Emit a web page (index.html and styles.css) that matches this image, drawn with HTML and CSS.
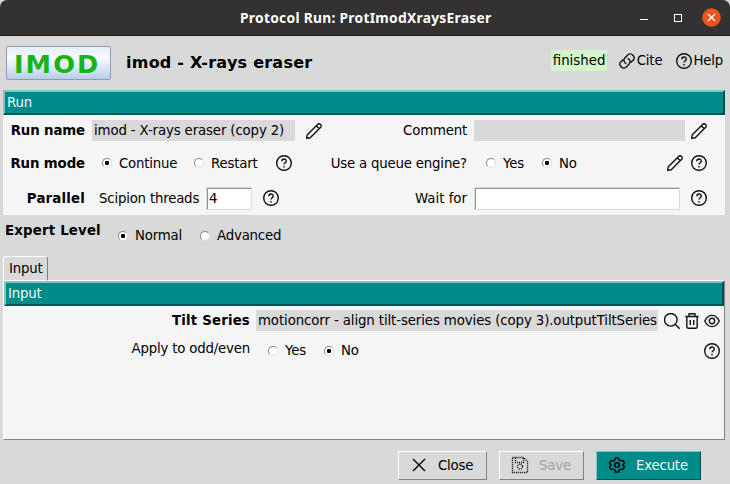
FILE: index.html
```html
<!DOCTYPE html>
<html lang="en">
<head>
<meta charset="utf-8">
<title>Protocol Run: ProtImodXraysEraser</title>
<link rel="stylesheet" href="styles.css">
</head>
<body>
<svg class="defs" width="0" height="0">
  <symbol id="help" viewBox="0 0 16 16"><circle cx="8" cy="8" r="7.3"/><path d="M5.8 6.3C5.8 3.2 10.3 3.3 10.3 6C10.3 7.7 8 7.8 8 9.6M8 11V12.4"/></symbol>
  <symbol id="pencil" viewBox="0 0 16 16"><path d="M.6 15.4L1.3 11.8L11.8 1.3C13.5-.4 16.4 2.5 14.7 4.2L4.2 14.7ZM10.4 2.9L13.1 5.6"/></symbol>
  <symbol id="link" viewBox="0 0 16 16"><path d="M4.2 6.4L1.7 8.9C-.9 11.9 3.5 16.9 7 14.3L10 11.3C12.1 8.9 10.8 6 8.6 5.3M11.8 9.6L14.3 7.1C16.9 4.1 12.5-.9 9 1.7L6 4.7C3.9 7.1 5.2 10 7.4 10.7"/></symbol>
  <symbol id="search" viewBox="0 0 16 16"><circle cx="6.8" cy="6.8" r="6.3"/><path d="M11.2 11.2L15.8 15.8"/></symbol>
  <symbol id="trash" viewBox="0 0 16 16"><path d="M1.3 3.5H14.7M5 3.2V.8H11V3.2M2.8 3.8V13.5Q2.8 15.3 4.5 15.3H11.5Q13.2 15.3 13.2 13.5V3.8M6.3 7V12M9.7 7V12"/></symbol>
  <symbol id="eye" viewBox="0 0 16 16"><path d="M.7 8Q3.7 2.4 8 2.4T15.3 8Q12.3 13.6 8 13.6T.7 8Z"/><circle cx="8" cy="8" r="2.7"/></symbol>
</svg>

<header class="titlebar">
  <span class="window-title">Protocol Run: ProtImodXraysEraser</span>
  <span class="window-controls">
    <i class="minimize"></i><i class="maximize"></i>
    <svg class="close" viewBox="0 0 19 19"><circle cx="9.5" cy="9.5" r="9.3"/><path d="M6 6L13 13M13 6L6 13"/></svg>
  </span>
</header>

<section class="protocol">
  <div class="logo">IMOD</div>
  <h1>imod - X-rays eraser</h1>
  <span class="status">finished</span>
  <span class="action cite"><svg class="icon"><use href="#link"/></svg>Cite</span>
  <span class="action"><svg class="icon"><use href="#help"/></svg>Help</span>
</section>

<section class="run">
  <h2 class="bar">Run</h2>
  <div class="grid">
    <b class="label tight">Run name</b>
    <div class="cell"><span class="value name">imod - X-rays eraser (copy 2)</span><svg class="icon"><use href="#pencil"/></svg></div>
    <span class="label">Comment</span>
    <div class="cell"><span class="value comment"></span><svg class="icon last"><use href="#pencil"/></svg></div>

    <b class="label tight">Run mode</b>
    <div class="cell radios"><i class="radio on"></i><span class="choice continue">Continue</span><i class="radio"></i><span class="choice restart">Restart</span><svg class="icon"><use href="#help"/></svg></div>
    <span class="label">Use a queue engine?</span>
    <div class="cell radios queue"><i class="radio"></i><span class="choice yes">Yes</span><i class="radio on"></i><span class="choice">No</span><svg class="icon last edit"><use href="#pencil"/></svg><svg class="icon"><use href="#help"/></svg></div>

    <b class="label">Parallel</b>
    <div class="cell threads"><span class="caption">Scipion threads</span><span class="entry small">4</span><svg class="icon"><use href="#help"/></svg></div>
    <span class="label wait">Wait for</span>
    <div class="cell"><span class="entry wide"></span><svg class="icon last"><use href="#help"/></svg></div>
  </div>
</section>

<section class="expert">
  <b>Expert Level</b>
  <div class="cell"><i class="radio on"></i><span class="choice normal">Normal</span><i class="radio"></i><span class="choice">Advanced</span></div>
</section>

<div class="tab">Input</div>
<section class="pane">
  <h2 class="bar">Input</h2>
  <div class="param">
    <b class="label">Tilt Series</b>
    <span class="value series">motioncorr - align tilt-series movies (copy 3).outputTiltSeries</span>
    <span class="tools"><svg class="icon"><use href="#search"/></svg><svg class="icon"><use href="#trash"/></svg><svg class="icon"><use href="#eye"/></svg></span>
  </div>
  <div class="param odd">
    <span class="label">Apply to odd/even</span>
    <div class="cell"><i class="radio"></i><span class="choice yes">Yes</span><i class="radio on"></i><span class="choice">No</span></div>
    <span class="tools"><svg class="icon"><use href="#help"/></svg></span>
  </div>
</section>

<footer>
  <div class="button shut"><svg class="icon" viewBox="0 0 16 16"><path d="M2 2L14 14M14 2L2 14"/></svg>Close</div>
  <div class="button save"><svg class="icon" viewBox="0 0 16 16"><path d="M.5 .5H11.5L15.5 4.5V15.5H.5ZM3.5 1V5.5H11.5V1"/><circle cx="8" cy="9.6" r="2.5"/></svg>Save</div>
  <div class="button execute"><svg class="icon" viewBox="0 0 16 16"><path d="M6.3 1H9.7L10.2 3.1L11.8 4L13.9 3.3L15.5 6.2L13.9 7.7V8.3L15.5 9.8L13.9 12.7L11.8 12L10.2 12.9L9.7 15H6.3L5.8 12.9L4.2 12L2.1 12.7L.5 9.8L2.1 8.3V7.7L.5 6.2L2.1 3.3L4.2 4L5.8 3.1Z"/><circle cx="8" cy="8" r="2.3"/></svg>Execute</div>
</footer>
</body>
</html>
```
FILE: styles.css
```css
* { box-sizing: border-box; }
body {
  margin: 0; width: 730px; height: 484px; overflow: hidden;
  background: #d9d9d9; color: #000;
  font: 13.33px/21px "DejaVu Sans", sans-serif; letter-spacing: -0.2px;
  white-space: nowrap;
}
.defs { display: block; }
b, h1 { font-weight: bold; }
b { letter-spacing: 0.18px; }
.tight { letter-spacing: -0.12px; }

.icon {
  width: 16px; height: 16px; flex: none; overflow: visible;
  fill: none; stroke: #111; stroke-width: 1.4; stroke-linejoin: round;
}

.titlebar {
  display: grid; grid-template-columns: 240px 1fr auto; align-items: center;
  height: 36px; padding-right: 9px;
  background: #333132; border-bottom: 1px solid #1d1c1c;
  border-radius: 7px 7px 0 0;
}
.window-title { grid-column: 2; color: #fff; font: bold 13.8px/35px "Noto Sans", sans-serif; letter-spacing: 0.28px; }
.window-controls { display: flex; align-items: center; }
.minimize { width: 8px; height: 1px; background: #fff; margin: 4px 26px 0 0; }
.maximize { width: 8px; height: 8px; border: 1px solid #fff; margin-right: 20px; }
.close { width: 19px; height: 19px; margin-top: -1px; fill: #e95420; stroke: #fff; stroke-width: 1.4; }
.close circle { stroke: none; }

.protocol { display: flex; height: 54px; padding: 10px 7px 0 6px; align-items: flex-start; }
.logo {
  width: 105px; height: 34px; padding-left: 7px;
  border: 1px solid #8c9bb0; border-radius: 2px;
  background: linear-gradient(#e4eefa, #f7fafe 35%, #b8cfe8);
  color: #14b514; font-weight: bold; font-size: 25.6px; line-height: 35px; letter-spacing: 2.1px;
}
h1 { margin: 6px 0 0 15px; font-size: 16px; line-height: 21px; letter-spacing: 0.24px; }
.status { margin: 4px 12px 0 auto; width: 56px; padding-left: 2px; letter-spacing: 0; background: #d2f5cb; }
.action { display: flex; align-items: center; margin-top: 4px; height: 21px; gap: 1px; }
.cite { margin-right: 14px; gap: 2px; }

.run { margin: 0 5px 0 3px; height: 125px; background: #f5f5f5; }
.bar {
  margin: 0; height: 25px; padding-left: 2px;
  border: 2px solid; border-color: #80c5c5 #004f4f #005454 #80c5c5;
  background: #008b8b; color: #f5f5f5; font-size: inherit; font-weight: normal; line-height: 21.5px;
}
.grid {
  display: grid; grid-template-columns: 82px 230px 138px 1fr; column-gap: 7px;
  grid-template-rows: 31px 34px 36px; align-items: center;
}
.label { text-align: right; justify-self: end; }
.wait { letter-spacing: 0; }
.cell { display: flex; align-items: center; }
.value { height: 21px; padding-left: 2px; background: #d9d9d9; }
.name { width: 204px; margin-right: 11px; letter-spacing: -0.14px; }
.series { letter-spacing: -0.11px; }
.comment { width: 211px; }
.last { margin-left: auto; }
.grid .cell:nth-child(4n) { padding-right: 18px; }

.radio { width: 10px; height: 10px; flex: none; border: 1px solid; border-color: #888 #ddd #ddd #888; border-radius: 50%; background: #fff; }
.on { background: radial-gradient(circle, #000 0 1.9px, #fff 2.5px); }
.radios { padding-left: 10px; }
.choice { margin-left: 7px; }
.continue { width: 75px; }
.restart { width: 65px; }
.yes { width: 39px; }
.queue { padding-left: 12px; }
.edit { margin-right: 8px; }
.threads { padding-left: 7px; }
.caption { width: 107px; }
.entry { height: 23px; padding-left: 2px; background: #fff; border: 1px solid #d9d9d9; box-shadow: inset 1px 1px #929292; line-height: 21px; }
.small { width: 46px; margin-right: 11px; }
.wide { width: 206px; }

.expert { display: flex; height: 41px; padding: 5px 5px 0; align-items: flex-start; }
.expert b { width: 113px; }
.expert .cell { margin-top: 5px; height: 21px; }
.normal { width: 65px; }

.tab {
  position: relative;
  width: 45px; height: 25px; margin-left: 3px; padding-left: 5px; line-height: 23px;
  border: 1px solid; border-color: #fff #828282 transparent #fff; border-radius: 3px 3px 0 0;
}
.pane {
  height: 160px; margin: -1px 5px 0 3px; background: #f5f5f5;
  border: 1px solid; border-color: #fff #828282 #828282 #fff;
}
.param { display: grid; grid-template-columns: 246px 402px 1fr; column-gap: 6px; height: 29px; align-items: center; }
.param .cell { padding-left: 12px; margin-top: 2px; }
.odd .label { margin-top: -2px; }
.tools { display: flex; justify-content: flex-end; gap: 4px; padding-right: 4px; }
.odd .tools { margin-top: 3px; }

footer { display: flex; justify-content: flex-end; margin-top: 11px; padding-right: 29px; gap: 12px; }
.button {
  display: flex; align-items: center; gap: 11px; height: 29px; padding-left: 12px; padding-bottom: 1px;
  border: 1px solid; border-color: #fff #828282 #828282 #fff;
}
.button svg { stroke: #000; }
.shut { width: 89px; }
.save { width: 85px; color: #a3a3a3; }
.save svg { stroke-dasharray: 1 1; }
.execute { width: 105px; background: #008b8b; border-color: #80c5c5 #005454 #005454 #80c5c5; color: #f5f5f5; }
```
